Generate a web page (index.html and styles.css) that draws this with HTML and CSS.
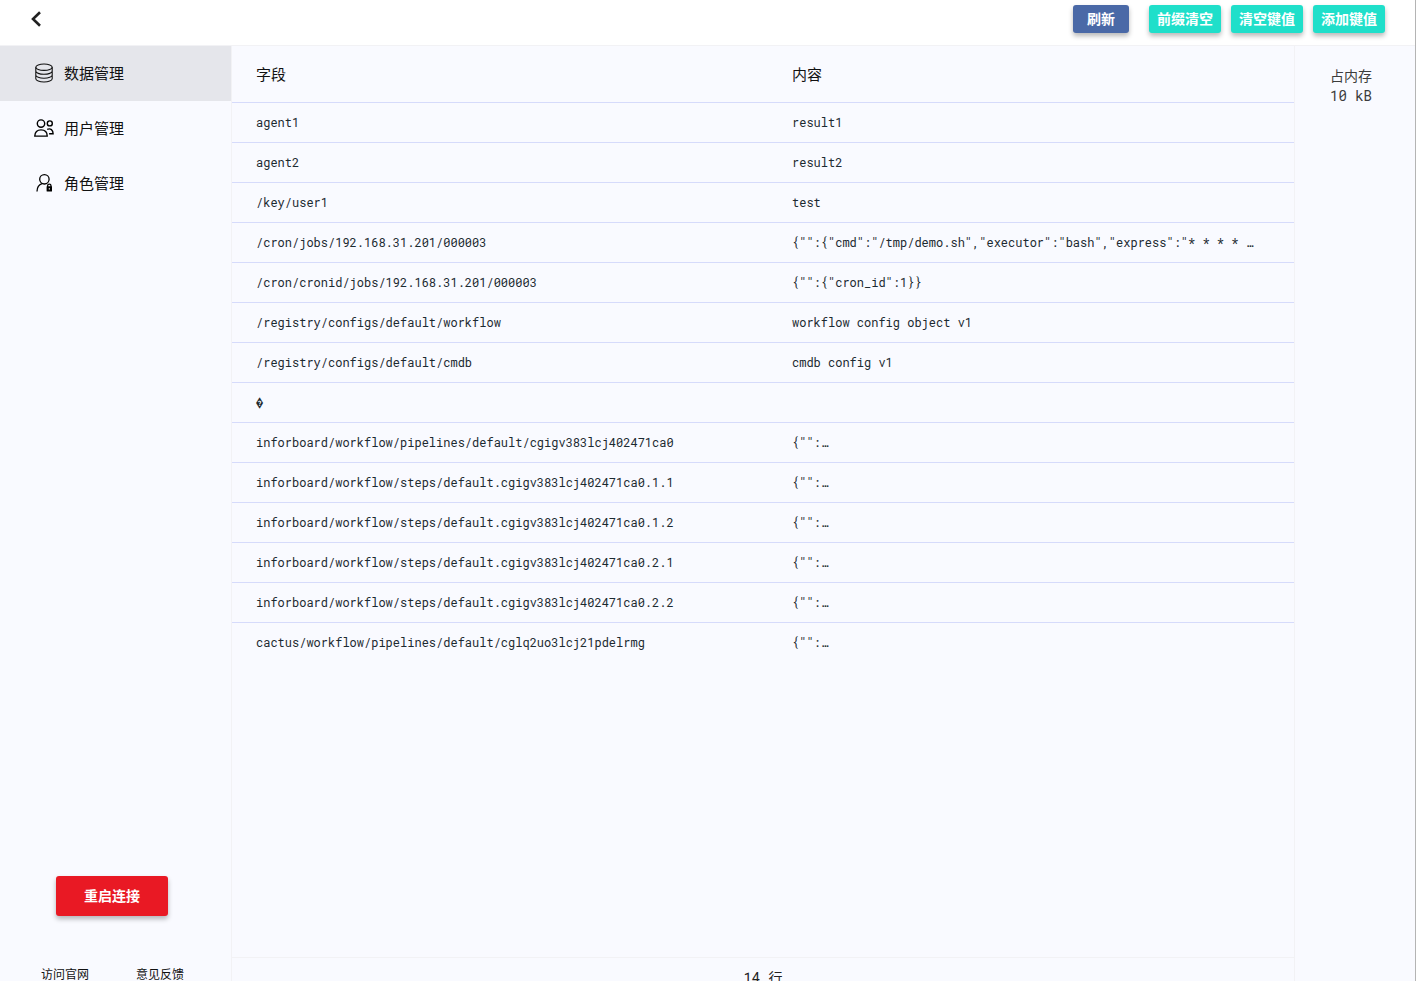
FILE: index.html
```html
<!DOCTYPE html>
<html lang="zh-CN">
<head>
<meta charset="utf-8">
<title>数据管理</title>
<link rel="stylesheet" href="styles.css">
</head>
<body>
<div class="app">
  <header class="topbar">
    <button class="back" type="button" aria-label="返回">
      <svg width="12" height="18" viewBox="0 0 12 18" fill="none" stroke="#212121" stroke-width="2.6"><path d="M10 2.2 3 9l7 6.8"/></svg>
    </button>
    <div class="actions">
      <button class="btn btn-refresh" type="button">刷新</button>
      <button class="btn" type="button">前缀清空</button>
      <button class="btn" type="button">清空键值</button>
      <button class="btn" type="button">添加键值</button>
    </div>
  </header>
  <div class="body">
    <aside class="sidebar">
      <nav class="nav">
        <a class="nav-item active" href="#data">
          <svg class="icon" viewBox="0 0 20 20" fill="none" stroke="#111" stroke-width="1.1"><ellipse cx="10" cy="4.2" rx="8.2" ry="3.2"/><path d="M1.8 4.2v11.6c0 1.8 3.7 3.2 8.2 3.2s8.2-1.4 8.2-3.2V4.2M1.8 8.1c0 1.8 3.7 3.2 8.2 3.2s8.2-1.4 8.2-3.2M1.8 12c0 1.8 3.7 3.2 8.2 3.2s8.2-1.4 8.2-3.2"/></svg>
          数据管理
        </a>
        <a class="nav-item" href="#users">
          <svg class="icon" viewBox="0 0 20 20" fill="none" stroke="#000" stroke-width="1.4"><circle cx="7" cy="5.6" r="3.7"/><path d="M.8 18.1c0-4 2.4-6.2 6.2-6.2s6.2 2.2 6.2 6.2z"/><circle cx="15.8" cy="5.4" r="2.5"/><path d="M13.2 11.3c3.4-1.2 5.9.5 5.9 4.4h-4"/></svg>
          用户管理
        </a>
        <a class="nav-item" href="#roles">
          <svg class="icon" viewBox="0 0 20 20" fill="none" stroke="#000" stroke-width="1.3"><circle cx="10.4" cy="6.3" r="4.7"/><path d="M3 18.4c.1-4 2-6.7 5-7.8M13.6 14v-1.2a1.7 1.7 0 0 1 3.4 0V14"/><rect x="12.6" y="13.2" width="5.4" height="5.4" rx=".6" fill="#000" stroke="none"/><path d="M15.3 15v1.6" stroke="#fff" stroke-width=".9"/></svg>
          角色管理
        </a>
      </nav>
      <button class="btn btn-restart" type="button">重启连接</button>
      <div class="links">
        <a href="#site">访问官网</a>
        <a href="#feedback">意见反馈</a>
      </div>
    </aside>
    <main class="content">
      <table class="table">
        <thead><tr><th>字段</th><th>内容</th></tr></thead>
        <tbody>
          <tr><td>agent1</td><td>result1</td></tr>
          <tr><td>agent2</td><td>result2</td></tr>
          <tr><td>/key/user1</td><td>test</td></tr>
          <tr><td>/cron/jobs/192.168.31.201/000003</td><td>{"":{"cmd":"/tmp/demo.sh","executor":"bash","express":"* * * * …</td></tr>
          <tr><td>/cron/cronid/jobs/192.168.31.201/000003</td><td>{"":{"cron_id":1}}</td></tr>
          <tr><td>/registry/configs/default/workflow</td><td>workflow config object v1</td></tr>
          <tr><td>/registry/configs/default/cmdb</td><td>cmdb config v1</td></tr>
          <tr><td>�</td><td></td></tr>
          <tr><td>inforboard/workflow/pipelines/default/cgigv383lcj402471ca0</td><td>{"":…</td></tr>
          <tr><td>inforboard/workflow/steps/default.cgigv383lcj402471ca0.1.1</td><td>{"":…</td></tr>
          <tr><td>inforboard/workflow/steps/default.cgigv383lcj402471ca0.1.2</td><td>{"":…</td></tr>
          <tr><td>inforboard/workflow/steps/default.cgigv383lcj402471ca0.2.1</td><td>{"":…</td></tr>
          <tr><td>inforboard/workflow/steps/default.cgigv383lcj402471ca0.2.2</td><td>{"":…</td></tr>
          <tr><td>cactus/workflow/pipelines/default/cglq2uo3lcj21pdelrmg</td><td>{"":…</td></tr>
        </tbody>
      </table>
      <footer class="count">14 行</footer>
    </main>
    <aside class="stats">
      <div>占内存</div>
      <div>10 kB</div>
    </aside>
  </div>
</div>
</body>
</html>
```
FILE: styles.css
```css
* { box-sizing: border-box; }
body {
  margin: 0;
  background: #f9faff;
  color: #212121;
  font-family: "Roboto Mono", "Liberation Mono", "Noto Sans CJK SC", monospace;
}
a { color: inherit; text-decoration: none; }
button { border: 0; font-family: inherit; cursor: pointer; }
.app {
  display: flex;
  flex-direction: column;
  height: 100vh;
  overflow: hidden;
  border-right: 1px solid #b4b4b4;
}
.topbar {
  display: flex;
  flex: none;
  justify-content: space-between;
  align-items: flex-start;
  height: 46px;
  padding: 5px 30px 0 24px;
  background: #fff;
  border-bottom: 1px solid #f2f2f5;
}
.back {
  display: flex;
  align-items: center;
  height: 28px;
  padding: 0 6px;
  background: none;
}
.actions { display: flex; gap: 10px; }
.btn {
  height: 28px;
  padding: 0 8px;
  border-radius: 3px;
  background: #1fdfca;
  color: #fff;
  font-size: 14px;
  font-weight: 700;
  line-height: 20px;
  box-shadow: 0 3px 5px rgba(0, 0, 0, .28);
}
.btn-refresh {
  margin-right: 10px;
  padding: 0 14px;
  background: #4a69a7;
}
.body { display: flex; flex: 1; min-height: 0; }
.sidebar {
  display: flex;
  flex: none;
  flex-direction: column;
  width: 232px;
  border-right: 1px solid #f2f2f5;
}
.nav { flex: 1; }
.nav-item {
  display: flex;
  align-items: center;
  gap: 10px;
  height: 55px;
  padding: 0 0 2px 34px;
  color: #111;
  font-size: 15px;
}
.nav-item.active { background: #e5e6eb; }
.icon { width: 20px; height: 20px; }
.btn-restart {
  width: 112px;
  height: 40px;
  margin: 0 0 50px 56px;
  background: #e91924;
}
.links {
  display: flex;
  gap: 47px;
  height: 15px;
  padding-left: 41px;
  color: #111;
  font-size: 12px;
  line-height: 16px;
}
.content {
  display: flex;
  flex: 1;
  flex-direction: column;
  justify-content: space-between;
  min-width: 0;
}
.table {
  width: 100%;
  table-layout: fixed;
  border-spacing: 0;
}
th, td {
  height: 40px;
  padding: 0 40px 0 24px;
  overflow: hidden;
  border-bottom: 1px solid #d6dbfb;
  font-size: 12px;
  line-height: 20px;
  text-align: left;
  text-overflow: ellipsis;
  white-space: nowrap;
}
td { padding-bottom: 2px; color: #1c2a31; }
th {
  height: 57px;
  color: #111;
  font-size: 15px;
  font-weight: 400;
}
th:first-child { width: 536px; }
tbody tr:last-child td { border-bottom: 0; }
.count {
  flex: none;
  height: 24px;
  padding-top: 10px;
  overflow: hidden;
  border-top: 1px solid #f2f2f5;
  font-size: 14px;
  line-height: 20px;
  text-align: center;
}
.stats {
  flex: none;
  width: 121px;
  padding: 20px 8px 0 0;
  border-left: 1px solid #f2f2f5;
  color: #3c3c3c;
  font-size: 14px;
  line-height: 20px;
  text-align: center;
}
```
